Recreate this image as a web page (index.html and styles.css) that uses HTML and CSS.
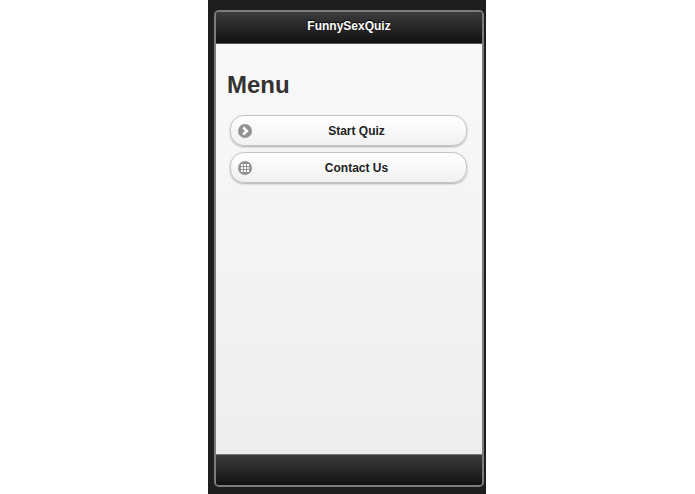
FILE: index.html
```
<!DOCTYPE html>
<html lang="en">
<head>
  <meta charset="UTF-8" />
  <meta name="viewport" content="width=device-width, initial-scale=1.0"/>
  <title>FunnySexQuiz</title>
  <link rel="stylesheet" href="styles.css">
</head>
<body>

  <div class="phone">
    <div class="screen">
      <header class="bar header">
        <h1>FunnySexQuiz</h1>
      </header>

      <main class="content">
        <h2>Menu</h2>

        <button class="menu-btn" type="button">
          <svg class="icon" viewBox="0 0 14 14" aria-hidden="true">
            <circle cx="7" cy="7" r="7" fill="#929292"/>
            <path d="M5.2 3.4 L8.8 7 L5.2 10.6" fill="none" stroke="#fff" stroke-width="2.6"/>
          </svg>
          <span>Start Quiz</span>
        </button>

        <button class="menu-btn" type="button">
          <svg class="icon" viewBox="0 0 14 14" aria-hidden="true">
            <circle cx="7" cy="7" r="7" fill="#929292"/>
            <g fill="#fff">
              <rect x="3" y="3" width="2" height="2"/>
              <rect x="6" y="3" width="2" height="2"/>
              <rect x="9" y="3" width="2" height="2"/>
              <rect x="3" y="6" width="2" height="2"/>
              <rect x="6" y="6" width="2" height="2"/>
              <rect x="9" y="6" width="2" height="2"/>
              <rect x="3" y="9" width="2" height="2"/>
              <rect x="6" y="9" width="2" height="2"/>
              <rect x="9" y="9" width="2" height="2"/>
            </g>
          </svg>
          <span>Contact Us</span>
        </button>
      </main>

      <footer class="bar footer"></footer>
    </div>
  </div>

</body>
</html>
```
FILE: styles.css
```
* {
  margin: 0;
  padding: 0;
  box-sizing: border-box;
  font-family: "Liberation Sans", Arial, sans-serif;
}

body {
  display: flex;
  justify-content: center;
  min-height: 100vh;
  padding-right: 1px;
  background: #fff;
}

.phone {
  display: flex;
  width: 100%;
  max-width: 278px;
  padding: 10px 2px 7px 6px;
  background: #1e1e1e;
}

.screen {
  display: flex;
  flex-direction: column;
  flex: 1;
  border: 2px solid #7c7c7c;
  border-radius: 5px;
  overflow: hidden;
}

.bar {
  background: linear-gradient(#3c3c3c, #111);
  color: #fff;
}

.header {
  padding: 6px 0 8px;
  border-bottom: 1px solid #555;
  text-align: center;
}

.header h1 {
  font-size: 12px;
  line-height: 17px;
  text-shadow: 0 -1px 1px #000;
}

.footer {
  height: 31px;
  border-top: 1px solid #777;
}

.content {
  flex: 1;
  padding: 26px 15px 15px 14px;
  background: linear-gradient(#f9f9f9, #eee);
}

h2 {
  margin: 0 0 16px -3px;
  font-size: 24px;
  line-height: 29px;
  color: #333;
}

.menu-btn {
  display: flex;
  align-items: center;
  width: 100%;
  height: 31px;
  margin-bottom: 6px;
  padding: 0 5px 0 7px;
  border: 1px solid #c4c4c4;
  border-radius: 14px;
  background: linear-gradient(#fff, #f1f1f1);
  box-shadow: 0 1px 2px rgba(0, 0, 0, 0.3);
  color: #222;
  font-size: 12px;
  font-weight: bold;
  cursor: pointer;
}

.menu-btn:hover {
  background: linear-gradient(#f6f6f6, #e0e0e0);
}

.menu-btn span {
  flex: 1;
}

.icon {
  width: 14px;
  height: 14px;
}
```
